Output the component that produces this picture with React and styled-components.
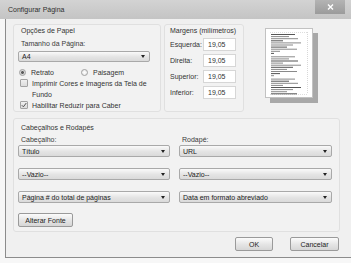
import React from 'react';
import styled, { createGlobalStyle } from 'styled-components';

const GlobalStyle = createGlobalStyle`
  html, body {
    margin: 0;
    padding: 0;
    background: #f7f7f7;
  }
  body {
    font-family: 'Liberation Sans', Arial, sans-serif;
    font-size: 7px;
    color: #333;
  }
`;

const Window = styled.div`
  width: 351px;
  height: 263px;
  display: flex;
  flex-direction: column;
  background: #f7f7f7;
`;
const TitleBar = styled.div`
  height: 19px;
  display: flex;
  align-items: flex-start;
  background: linear-gradient(#d3d3d3, #c4c4c4);
  padding: 0 6px 0 8px;
  flex-shrink: 0;
`;
const Title = styled.span`
  flex: 1;
  line-height: 20px;
  font-size: 7px;
  color: #2e2e2e;
`;
const CloseButton = styled.div`
  width: 30px;
  height: 14px;
  display: flex;
  align-items: center;
  justify-content: center;
  background: linear-gradient(#b4b4b4, #9b9b9b);
`;
const Frame = styled.div`
  flex: 1;
  padding: 0 5px 5px 5px;
  display: flex;
`;
const Panel = styled.div`
  flex: 1;
  background: #f0f0f0;
  border: 1px solid #8c8c8c;
  border-top: none;
  padding: 5px 14px 0 7px;
  display: flex;
  flex-direction: column;
`;
const TopRow = styled.div`
  display: flex;
  align-items: flex-start;
`;
const Group = styled.div`
  border: 1px solid #e0e0e0;
  border-radius: 3px;
  background: #f2f2f2;
  width: ${({ w }) => w}px;
  height: ${({ h }) => h}px;
  margin: ${({ mt }) => mt || 0}px 0 0 ${({ ml }) => ml || 0}px;
  padding: ${({ pad }) => pad};
  display: flex;
  flex-direction: column;
  box-sizing: border-box;
`;
const GroupTitle = styled.div`
  line-height: 10px;
  margin-left: 3px;
  color: #333;
`;
const Label = styled.div`
  line-height: 10px;
  margin: ${({ m }) => m || '0 0 0 3px'};
  color: #3a3a3a;
`;
const Select = styled.div`
  height: 12px;
  box-sizing: border-box;
  border: 1px solid #a9a9a9;
  border-radius: 2px;
  background: linear-gradient(#fafafa, #e4e4e4 55%, #dadada);
  display: flex;
  align-items: center;
  padding: 0 4px 0 3px;
  margin-top: ${({ mt }) => mt || 0}px;
  color: #222;
  span {
    flex: 1;
  }
`;
const Arrow = styled.i`
  width: 0;
  height: 0;
  border-left: 2.5px solid transparent;
  border-right: 2.5px solid transparent;
  border-top: 3px solid #222;
`;
const RadioRow = styled.div`
  display: flex;
  align-items: center;
  height: 12px;
  margin-top: 5px;
  padding-left: 1px;
`;
const RadioItem = styled.label`
  display: flex;
  align-items: center;
  width: ${({ w }) => w}px;
  gap: 5px;
`;
const RadioDot = styled.span`
  width: 7px;
  height: 7px;
  border-radius: 50%;
  border: 1px solid #a0a0a0;
  background: radial-gradient(circle, ${({ on }) => (on ? '#5a5a5a 0 35%, #d8d8d8 45%' : '#fff 0, #e2e2e2')});
  box-sizing: border-box;
`;
const CheckRow = styled.div`
  display: flex;
  align-items: flex-start;
  line-height: 11px;
  height: ${({ h }) => h}px;
  padding-left: 2px;
  gap: 4px;
`;
const Box = styled.span`
  width: 8px;
  height: 8px;
  flex-shrink: 0;
  margin-top: 1px;
  border: 1px solid #a3a3a3;
  border-radius: 1px;
  background: linear-gradient(#f0f0f0, #dcdcdc);
  box-sizing: border-box;
  display: flex;
  align-items: center;
  justify-content: center;
`;
const MarginRow = styled.div`
  display: flex;
  align-items: center;
  height: 13px;
  margin-top: ${({ first }) => (first ? 2 : 3)}px;
  padding-left: 3px;
`;
const MarginLabel = styled.span`
  width: 33px;
`;
const NumInput = styled.div`
  width: 33px;
  height: 13px;
  box-sizing: border-box;
  background: #fff;
  border: 1px solid #d6d6d6;
  padding-left: 4px;
  line-height: 11px;
  color: #333;
`;
const Preview = styled.div`
  width: 48px;
  height: 70px;
  margin: 4px 0 0 21px;
  background: #fff;
  border: 1px solid #c2c2c2;
  box-sizing: border-box;
  box-shadow: 5px 5px 0 #a8a8a8;
`;
const Grid = styled.div`
  display: grid;
  grid-template-columns: 152px 153px;
  column-gap: 9px;
`;
const Button = styled.div`
  width: ${({ w }) => w}px;
  height: 14px;
  box-sizing: border-box;
  border: 1px solid #9a9a9a;
  border-radius: 2px;
  background: linear-gradient(#fbfbfb, #e6e6e6 50%, #d6d6d6);
  display: flex;
  align-items: center;
  justify-content: center;
  color: #222;
  margin-top: ${({ mt }) => mt || 0}px;
`;
const Footer = styled.div`
  display: flex;
  justify-content: flex-end;
  gap: 17px;
  margin-top: 5px;
  padding-right: 1px;
`;

const DropDown = ({ value, mt }) => (
  <Select mt={mt}>
    <span>{value}</span>
    <Arrow />
  </Select>
);

// fake text lines on the page thumbnail
const pageLines = (() => {
  const out = [];
  const widths = [24, 18, 27, 12, 30, 22, 16, 26, 9, 4];
  let y = 5;
  let i = 0;
  while (y < 66) {
    const w = widths[i % widths.length];
    out.push({ y, w: w > 5 ? w : 3 });
    y += i % 10 === 9 ? 3.4 : 2.1;
    i += 1;
  }
  return out;
})();

const PageDrawing = () => (
  <svg width="46" height="68" viewBox="0 0 46 68">
    <line x1="4" y1="3.5" x2="42" y2="3.5" stroke="#c8c8c8" strokeWidth="0.6" strokeDasharray="1 1" />
    <line x1="41.5" y1="3" x2="41.5" y2="65" stroke="#bdbdbd" strokeWidth="0.6" strokeDasharray="1 1" />
    <line x1="4" y1="65.5" x2="42" y2="65.5" stroke="#c8c8c8" strokeWidth="0.6" strokeDasharray="1 1" />
    {pageLines.map((l, i) => (
      <rect key={i} x="5" y={l.y} width={l.w} height="1" fill={i % 3 === 0 ? '#555' : '#8a8a8a'} />
    ))}
  </svg>
);

const Check = () => (
  <svg width="6" height="6" viewBox="0 0 6 6">
    <path d="M0.8 3.2 L2.4 4.8 L5.3 1" fill="none" stroke="#555" strokeWidth="1" />
  </svg>
);

const margins = [
  ['Esquerda:', '19,05'],
  ['Direita:', '19,05'],
  ['Superior:', '19,05'],
  ['Inferior:', '19,05'],
];

export default function App() {
  return (
    <Window>
      <GlobalStyle />
      <TitleBar>
        <Title>Configurar Página</Title>
        <CloseButton>
          <svg width="7" height="6" viewBox="0 0 7 6">
            <path d="M1 0.5 L6 5.5 M6 0.5 L1 5.5" stroke="#fff" strokeWidth="1.4" />
          </svg>
        </CloseButton>
      </TitleBar>
      <Frame>
        <Panel>
          <TopRow>
            <Group w={148} h={88} pad="1px 10px 0 4px">
              <GroupTitle>Opções de Papel</GroupTitle>
              <Label m="3px 0 0 3px">Tamanho da Página:</Label>
              <DropDown value="A4" mt={2} />
              <RadioRow>
                <RadioItem w={62}>
                  <RadioDot on />
                  Retrato
                </RadioItem>
                <RadioItem w={60}>
                  <RadioDot />
                  Paisagem
                </RadioItem>
              </RadioRow>
              <CheckRow h={22}>
                <Box />
                <span>
                  Imprimir Cores e Imagens da Tela de
                  <br />
                  Fundo
                </span>
              </CheckRow>
              <CheckRow h={11}>
                <Box>
                  <Check />
                </Box>
                <span>Habilitar Reduzir para Caber</span>
              </CheckRow>
            </Group>
            <Group w={80} h={88} ml={3} pad="1px 0 0 2px">
              <GroupTitle>Margens (milímetros)</GroupTitle>
              {margins.map(([label, value], i) => (
                <MarginRow key={label} first={i === 0}>
                  <MarginLabel>{label}</MarginLabel>
                  <NumInput>{value}</NumInput>
                </MarginRow>
              ))}
            </Group>
            <Preview>
              <PageDrawing />
            </Preview>
          </TopRow>
          <Group w={327} h={114} mt={6} pad="4px 0 0 4px">
            <GroupTitle>Cabeçalhos e Rodapés</GroupTitle>
            <Grid>
              <Label m="2px 0 0 3px">Cabeçalho:</Label>
              <Label m="2px 0 0 3px">Rodapé:</Label>
              <DropDown value="Título" />
              <DropDown value="URL" />
              <DropDown value="--Vazio--" mt={11} />
              <DropDown value="--Vazio--" mt={11} />
              <DropDown value="Página # do total de páginas" mt={11} />
              <DropDown value="Data em formato abreviado" mt={11} />
            </Grid>
            <Button w={55} mt={10}>
              Alterar Fonte
            </Button>
          </Group>
          <Footer>
            <Button w={38}>OK</Button>
            <Button w={49}>Cancelar</Button>
          </Footer>
        </Panel>
      </Frame>
    </Window>
  );
}
